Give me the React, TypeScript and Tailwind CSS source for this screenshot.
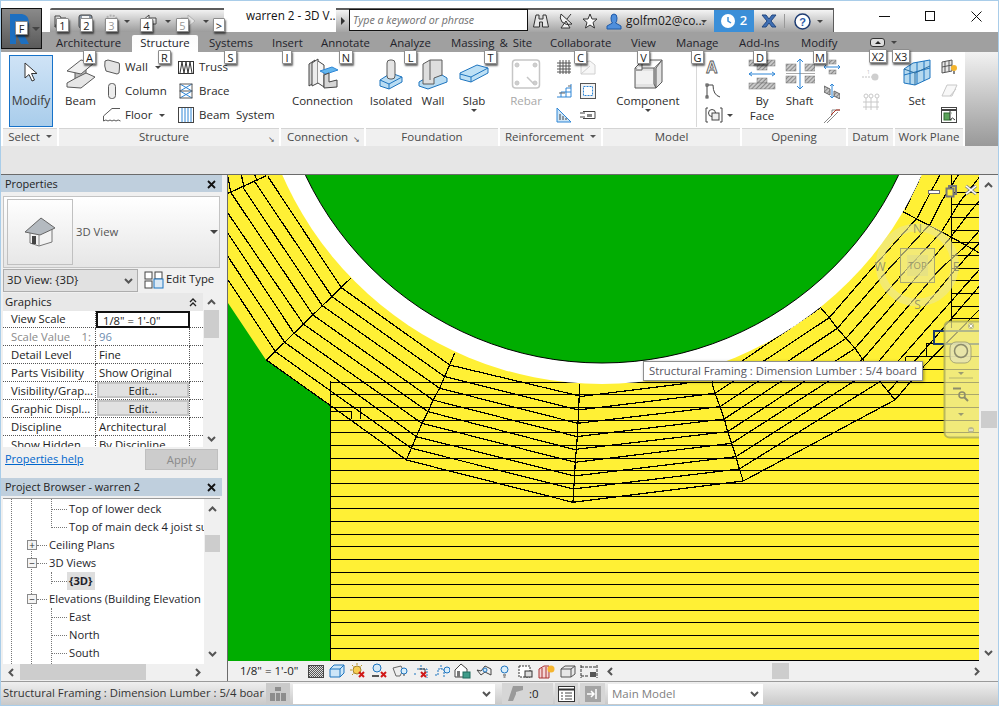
import React from "react";

// small helpers
function Tip({ className, children, off }: { className: string; children: React.ReactNode; off?: boolean }) {
  return (
    <div
      className={
        "absolute h-[14px] flex items-center justify-center bg-white border border-[#8c8c8c] rounded-[1px] shadow-[1px_2px_2px_rgba(0,0,0,0.6)] text-[11px] leading-none " +
        (off ? "text-[#9a9a9a] " : "text-[#222222] ") +
        className
      }
    >
      {children}
    </div>
  );
}

function Arrow({ className = "" }: { className?: string }) {
  return <span className={"inline-block w-0 h-0 border-x-[3px] border-x-transparent border-t-[3px] border-t-[#444444] " + className} />;
}

function Chevron({ dir, className = "" }: { dir: "up" | "down" | "left" | "right"; className?: string }) {
  const d = { up: "M1 6 L4.5 2.5 L8 6", down: "M1 3 L4.5 6.5 L8 3", left: "M6 1 L2.5 4.5 L6 8", right: "M3 1 L6.5 4.5 L3 8" }[dir];
  return (
    <svg width="9" height="9" viewBox="0 0 9 9" className={className}>
      <path d={d} fill="none" stroke="#555555" strokeWidth="2" />
    </svg>
  );
}

function CloseX() {
  return (
    <svg width="9" height="9" viewBox="0 0 9 9">
      <path d="M1 1 L8 8 M8 1 L1 8" stroke="#111111" strokeWidth="1.8" />
    </svg>
  );
}

function Big({ label, second, w, arrow, off, children }: { label: string; second?: string; w: string; arrow?: boolean; off?: boolean; children: React.ReactNode }) {
  return (
    <div className={"flex flex-col items-center pt-[6px] shrink-0 " + w}>
      <div className="h-[32px] flex items-center justify-center">{children}</div>
      <div className={"mt-[3px] leading-[15px] whitespace-nowrap " + (off ? "text-[#a8a8a8]" : "")}>{label}</div>
      {second && <div className="leading-[15px]">{second}</div>}
      {arrow && <Arrow className="mt-[1px]" />}
    </div>
  );
}

function SmallRow({ icon, label, arrow }: { icon: React.ReactNode; label: string; arrow?: boolean }) {
  return (
    <div className="h-[24px] flex items-center whitespace-pre">
      <div className="w-[20px] flex justify-center mr-[3px]">{icon}</div>
      <span>{label}</span>
      {arrow && <Arrow className="ml-[7px]" />}
    </div>
  );
}

function Panel({ title, w, corner, drop, children }: { title: string; w: string; corner?: boolean; drop?: boolean; children: React.ReactNode }) {
  return (
    <div className={"flex flex-col shrink-0 " + w}>
      <div className="h-[76px] flex">{children}</div>
      <div className={"h-[18px] bg-[#f0f0f0] border-t border-[#d4d4d4] flex items-center justify-center relative text-[#4a4a4a] leading-none pb-[2px] " + (corner ? "pr-[10px]" : "")}>
        <span>{title}</span>
        {drop && <Arrow className="ml-[6px] border-t-[#555555]" />}
        {corner && <span className="absolute right-[4px] bottom-[3px] text-[8px] text-[#555555]">↘</span>}
      </div>
    </div>
  );
}

const g = "#5a5a5a";
const bl = "#2f86d6";

function BeamIcon() {
  return (
    <svg width="30" height="32" viewBox="0 0 30 32">
      <path d="M9 14 L9 24 L20 18 L20 9 Z" fill="#bcbcbc" stroke={g} />
      <path d="M1 13 L15 2 L28 5 L15 16 Z" fill="#f0f0f0" stroke={g} />
      <path d="M1 25 L10 20 L20 15 L29 19 L15 30 L1 29 Z" fill="#e6e6e6" stroke={g} />
    </svg>
  );
}
const WallS = () => (
  <svg width="16" height="16" viewBox="0 0 16 16"><path d="M1 2 L4 1 L15 4 Q16 5 15 14 L13 15 L2 12 Q0 7 1 2 Z" fill="#e4e4e4" stroke={g} /></svg>
);
const ColumnS = () => (
  <svg width="10" height="16" viewBox="0 0 10 16"><rect x="1.5" y="0.5" width="7" height="15" rx="3" fill="#ededed" stroke={g} /></svg>
);
const FloorS = () => (
  <svg width="18" height="16" viewBox="0 0 18 16"><path d="M0.5 9 L9 1.5 L17 1.5 M0.5 9 L0.5 14 Q3 12 5 14 Q7 12 9 14 Q11 12 13 14 Q15 12 17.5 14" fill="none" stroke={g} /></svg>
);
const TrussS = () => (
  <svg width="16" height="13" viewBox="0 0 16 13"><rect x="0.5" y="0.5" width="15" height="12" fill="#fff" stroke="#333" /><path d="M2 12 L4 1 L6 12 L8 1 L10 12 L12 1 L14 12" fill="none" stroke="#333" /></svg>
);
const BraceS = () => (
  <svg width="14" height="16" viewBox="0 0 14 16"><path d="M1 1 L13 8 L1 15 M13 1 L1 8 L13 15" fill="none" stroke={bl} /><path d="M0.5 1 H13.5 M0.5 8 H13.5 M0.5 15 H13.5 M1 1 V15 M13 1 V15" fill="none" stroke={g} /></svg>
);
const BeamSys = () => (
  <svg width="16" height="16" viewBox="0 0 16 16"><rect x="0.5" y="0.5" width="15" height="15" fill="#fff" stroke="#444" /><path d="M4 1 V15 M7 1 V15 M10 1 V15 M13 1 V15" stroke={bl} /></svg>
);
const ConnIcon = () => (
  <svg width="32" height="32" viewBox="0 0 32 32">
    <path d="M2 6 L8 2 L8 24 L2 28 Z" fill="#d4d4d4" stroke="#444" />
    <path d="M5 5 L11 1 L11 25 L5 28 Z" fill="#ececec" stroke="#444" />
    <path d="M11 3 L17 7 L17 29 L11 25" fill="#f6f6f6" stroke="#444" />
    <path d="M13 13 L25 9 L31 12 L19 16 Z" fill="#63b6ee" stroke={bl} />
    <path d="M17 17 L22 15 L22 24 L30 22 L30 29 L17 30 Z" fill="#d6d6d6" stroke="#444" />
  </svg>
);
const IsoIcon = () => (
  <svg width="24" height="32" viewBox="0 0 24 32">
    <path d="M1 22 L12 15 L23 19 L23 24 L10 31 L1 28 Z" fill="#b9dcf2" stroke="#1d74bf" />
    <path d="M1 22 L10 26 L23 19 M10 26 V31" fill="none" stroke="#1d74bf" />
    <rect x="8" y="2" width="8" height="19" rx="3" fill="#e4e4e4" stroke={g} />
  </svg>
);
const WallFIcon = () => (
  <svg width="30" height="32" viewBox="0 0 30 32">
    <path d="M1 24 L8 20 L24 17 L29 20 L29 24 L10 31 L1 28 Z" fill="#b9dcf2" stroke="#1d74bf" />
    <path d="M5 6 L12 2 L24 2 L24 17 L16 20 L16 26 L5 26 Z" fill="#dedede" stroke={g} />
    <path d="M12 2 V22" stroke={g} />
  </svg>
);
const SlabIcon = () => (
  <svg width="30" height="20" viewBox="0 0 30 20">
    <path d="M1 9 L18 1 L29 4 L29 9 L12 18 L1 15 Z" fill="#bde0f5" stroke="#1d74bf" />
    <path d="M1 10 L12 13 L29 4 M12 13 V18" fill="none" stroke="#1d74bf" />
  </svg>
);
const RebarIcon = () => (
  <svg width="30" height="32" viewBox="0 0 30 32" stroke="#c6c6c6" fill="none">
    <rect x="1.5" y="2" width="27" height="28" rx="3" strokeWidth="1.5" />
    <circle cx="6" cy="7" r="2" fill="#cfcfcf" />
    <circle cx="24" cy="7" r="2" fill="#cfcfcf" />
    <circle cx="6" cy="25" r="2" fill="#cfcfcf" />
    <circle cx="24" cy="25" r="2" fill="#cfcfcf" />
    <path d="M16 19 L23 26" strokeWidth="1.5" />
  </svg>
);
const GridS = () => (
  <svg width="14" height="14" viewBox="0 0 14 14"><path d="M0 3 H14 M0 6 H14 M0 9 H14 M0 12 H14 M3 0 V14 M6 0 V14 M9 0 V14 M12 0 V14" stroke="#555" /></svg>
);
const CoverS = () => (
  <svg width="16" height="15" viewBox="0 0 16 15"><path d="M1 3 L10 1 L15 5 V14 H1 Z M1 14 L10 6" fill="#f7f7f7" stroke="#d0d0d0" /></svg>
);
const DimS = () => (
  <svg width="16" height="16" viewBox="0 0 16 16"><path d="M1 14 H15 V1 M10 14 V5 H15 M5 14 V9 H15" fill="none" stroke={bl} /><path d="M3 10 H9 M12 3 H15" stroke="#666" /></svg>
);
const AreaS = () => (
  <svg width="16" height="16" viewBox="0 0 16 16"><rect x="0.5" y="0.5" width="15" height="15" fill="#f2f2f2" stroke="#555" /><rect x="3.5" y="3.5" width="9" height="9" fill="#fff" stroke={bl} strokeDasharray="2 1" /></svg>
);
const PathS = () => (
  <svg width="16" height="16" viewBox="0 0 16 16"><path d="M1 1 L15 15 H1 Z" fill="#cfe6f7" stroke={bl} /><path d="M4 13 V7 M7 13 V9 M10 13 V11" stroke="#444" /></svg>
);
const CouplerS = () => (
  <svg width="16" height="10" viewBox="0 0 16 10"><path d="M3 1.5 H15 V8.5 H3 M0 3 H5 M0 7 H5" fill="#fff" stroke="#444" /><rect x="7" y="4" width="5" height="3" fill="#888" /></svg>
);
const CompIcon = () => (
  <svg width="30" height="32" viewBox="0 0 30 32">
    <path d="M2 10 L21 10 L29 2 L29 24 L23 30 L2 30 Z" fill="#e2e2e2" stroke={g} />
    <path d="M21 10 V26 L23 30 L23 10 L29 2" fill="#c8c8c8" stroke={g} />
    <path d="M2 10 L10 2 L29 2 M9 3 V12 L3 12" fill="#f4f4f4" stroke={g} />
    <rect x="3" y="13" width="17" height="13" fill="#f1f1f1" />
  </svg>
);
const ModelA = () => (
  <svg width="18" height="16" viewBox="0 0 18 16">
    <text x="1" y="14" fontSize="16" fontWeight="700" fill="#f4f4f4" stroke="#555" strokeWidth="0.8" fontFamily="Liberation Sans">A</text>
  </svg>
);
const ModelLine = () => (
  <svg width="16" height="16" viewBox="0 0 16 16"><path d="M2 3 V13 M2 2 H8 Q8 12 15 14" fill="none" stroke="#444" /><rect x="1" y="1" width="2" height="2" fill="#fff" stroke="#444" /><rect x="1" y="13" width="2" height="2" fill="#fff" stroke="#444" /></svg>
);
const ModelGroup = () => (
  <svg width="18" height="16" viewBox="0 0 18 16"><path d="M3 1 H1 V15 H3 M15 1 H17 V15 H15" fill="none" stroke="#444" /><circle cx="7" cy="6" r="3.5" fill="#fff" stroke="#444" /><rect x="7" y="6" width="7" height="7" fill="#eee" stroke="#444" /></svg>
);
function HatchBar({ x, y, w, h }: { x: number; y: number; w: number; h: number }) {
  return <rect x={x} y={y} width={w} height={h} fill="url(#hatch)" stroke="#777" strokeWidth="0.5" />;
}
const FaceIcon = () => (
  <svg width="28" height="32" viewBox="0 0 28 32">
    <defs>
      <pattern id="hatch" width="3" height="3" patternUnits="userSpaceOnUse" patternTransform="rotate(45)">
        <rect width="3" height="3" fill="#c8c8c8" />
        <rect width="1" height="3" fill="#888888" />
      </pattern>
    </defs>
    <HatchBar x={1} y={2} w={26} h={6} />
    <HatchBar x={9} y={8} w={10} h={4} />
    <HatchBar x={9} y={20} w={10} h={5} />
    <HatchBar x={1} y={25} w={26} h={6} />
    <path d="M1 16 H27 M4 14 L1 16 L4 18 M24 14 L27 16 L24 18" fill="none" stroke={bl} />
  </svg>
);
const ShaftIcon = () => (
  <svg width="30" height="32" viewBox="0 0 30 32">
    <HatchBar x={1} y={6} w={10} h={7} />
    <HatchBar x={20} y={6} w={10} h={7} />
    <HatchBar x={1} y={18} w={10} h={7} />
    <HatchBar x={20} y={18} w={10} h={7} />
    <path d="M1 15.5 H30" stroke="#aaa" />
    <path d="M15 1 V31 M12 4 L15 1 L18 4 M12 28 L15 31 L18 28" fill="none" stroke={bl} />
  </svg>
);
const OpenA = () => (
  <svg width="16" height="16" viewBox="0 0 16 16"><HatchBar x={5} y={1} w={7} h={4} /><HatchBar x={5} y={11} w={7} h={4} /><path d="M0 8 H16 M2 6 L0 8 L2 10 M14 6 L16 8 L14 10" fill="none" stroke={bl} /></svg>
);
const OpenB = () => (
  <svg width="16" height="16" viewBox="0 0 16 16"><path d="M0 3 L6 6 V12 L0 9 Z M10 8 L16 11 V16 L10 13 Z" fill="url(#hatch)" stroke="#666" /><path d="M8 1 V15 M6 3 L8 1 L10 3 M6 13 L8 15 L10 13" fill="none" stroke={bl} /></svg>
);
const OpenC = () => (
  <svg width="16" height="16" viewBox="0 0 16 16"><path d="M0 16 L8 8 V3 H16 M3 16 L14 5" fill="none" stroke="#888" /><path d="M7 8 L12 3 H16" fill="none" stroke="#b33020" /></svg>
);
const Level = () => (
  <svg width="18" height="14" viewBox="0 0 18 14"><path d="M0 7 H10" stroke="#c4c4c4" strokeDasharray="2 1" /><circle cx="13" cy="7" r="3.5" fill="#cfcfcf" /><text x="5" y="4" fontSize="5" fill="#bbb">1</text></svg>
);
const GridD = () => (
  <svg width="18" height="18" viewBox="0 0 18 18" fill="none" stroke="#c8c8c8"><circle cx="4" cy="3" r="2" /><circle cx="9" cy="3" r="2" /><circle cx="15" cy="3" r="2" /><path d="M1 9 H17 M1 14 H17 M4 5 V17 M15 5 V17 M9 5 V17" /></svg>
);
const SetIcon = () => (
  <svg width="28" height="30" viewBox="0 0 28 30">
    <path d="M1 10 L10 4 L27 1 L27 19 L12 26 L1 24 Z" fill="#b5d9ef" stroke="#1d74bf" />
    <path d="M7 6 V25 M14 3 V25 M21 2 V22 M1 16 L27 9" stroke="#1d74bf" fill="none" />
    <path d="M1 10 L12 14 L27 7 M12 14 V26" stroke="#2d6f9f" fill="none" />
  </svg>
);
const RefLight = () => (
  <svg width="17" height="17" viewBox="0 0 17 17"><path d="M1 3 L11 1 V12 L1 14 Z M1 8 L11 6 M4 2 V13 M8 2 V12" fill="#e8e8e8" stroke="#555" /><circle cx="13" cy="9" r="3" fill="#f5b52e" /><rect x="12" y="12" width="2" height="3" fill="#888" /></svg>
);
const RefPlane = () => (
  <svg width="17" height="16" viewBox="0 0 17 16"><path d="M1 13 L6 2 H16 L11 13 Z M9 13 L15 6" fill="#f8f8f8" stroke="#c8c8c8" /></svg>
);
const ViewerS = () => (
  <svg width="16" height="16" viewBox="0 0 16 16"><rect x="0.5" y="0.5" width="15" height="15" fill="#fff" stroke="#444" /><path d="M0.5 3 H15.5" stroke="#444" strokeWidth="2" /><rect x="3" y="6" width="7" height="7" fill="#5ba35b" stroke="#2f6b2f" /><path d="M9 4 V13 L11.5 11 L14 13" fill="#fff" stroke="#333" /></svg>
);

const QFolder = () => (
  <svg width="15" height="15" viewBox="0 0 15 15"><path d="M1 2 H6 L7 4 H12 V6 M1 2 V13 L4 6 H14 L11 13 H1" fill="#efefef" stroke="#444" /></svg>
);
const QSave = () => (
  <svg width="15" height="15" viewBox="0 0 15 15"><rect x="1" y="1" width="13" height="13" rx="2" fill="#8a98a8" stroke="#444" /><rect x="4" y="2" width="7" height="5" fill="#f4f4f4" /></svg>
);
const QSync = () => (
  <svg width="15" height="15" viewBox="0 0 15 15"><circle cx="7.5" cy="7.5" r="6" fill="none" stroke="#b0b0b0" strokeWidth="2" strokeDasharray="2 1.2" /><circle cx="7.5" cy="7.5" r="2" fill="none" stroke="#b0b0b0" /></svg>
);
const QUndo = ({ off }: { off?: boolean }) => (
  <svg width="16" height="14" viewBox="0 0 16 14"><path d={off ? "M15 7 L8 1 V4 H1 V10 H8 V13 Z" : "M1 7 L8 1 V4 H15 V10 H8 V13 Z"} fill={off ? "#e6e6e6" : "#f2f2f2"} stroke={off ? "#b0b0b0" : "#444"} /></svg>
);

function Btn3({ children }: { children: React.ReactNode }) {
  return <div className="w-[21px] flex justify-center shrink-0">{children}</div>;
}
const RedX = ({ x = 9, y = 9 }: { x?: number; y?: number }) => (
  <path d={`M${x} ${y} l5 5 m0 -5 l-5 5`} stroke="#d01818" strokeWidth="2" />
);

const viewIcons = [
  <svg width="16" height="13" viewBox="0 0 16 13"><defs><pattern id="chk" width="2" height="2" patternUnits="userSpaceOnUse"><rect width="2" height="2" fill="#dddddd" /><rect width="1" height="1" fill="#555555" /><rect x="1" y="1" width="1" height="1" fill="#555555" /></pattern></defs><rect x="0.5" y="0.5" width="15" height="12" fill="url(#chk)" stroke="#444" /></svg>,
  <svg width="16" height="14" viewBox="0 0 16 14"><path d="M1 5 L5 1 H15 V9 L11 13 H1 Z M1 5 H11 V13 M11 5 L15 1" fill="#cde6f8" stroke="#1d74bf" /></svg>,
  <svg width="16" height="16" viewBox="0 0 16 16"><circle cx="7" cy="7" r="4" fill="#f6ce55" stroke="#a8862a" /><path d="M7 0 V2 M0 7 H2 M2 2 L3.5 3.5 M12 2 L10.5 3.5 M2 12 L3.5 10.5" stroke="#b8962a" /><RedX /></svg>,
  <svg width="16" height="16" viewBox="0 0 16 16"><circle cx="6" cy="5" r="4" fill="#d5e9f7" stroke="#1d74bf" /><path d="M1 13 H8" stroke="#555" strokeWidth="2" /><RedX x={10} y={9} /></svg>,
  <svg width="16" height="15" viewBox="0 0 16 15"><path d="M1 4 L9 2 L11 6 L8 12 H4 Z" fill="#eee" stroke="#666" /><circle cx="12" cy="7" r="3" fill="#d9eefb" stroke="#1d74bf" /><path d="M11 11 H13" stroke="#444" /></svg>,
  <svg width="16" height="15" viewBox="0 0 16 15"><path d="M4 5 H14 V14 M1 10 H4 M8 1 V5" fill="none" stroke="#1d74bf" strokeDasharray="2 1" /><path d="M6 5 H12 V9" stroke="#444" fill="none" /><RedX x={8} y={8} /></svg>,
  <svg width="16" height="15" viewBox="0 0 16 15"><path d="M1 11 H4 V5 H10 V14 M7 1 V5" fill="none" stroke="#1d74bf" strokeDasharray="2 1" /><circle cx="13" cy="6" r="3" fill="#d9eefb" stroke="#1d74bf" /></svg>,
  <svg width="17" height="16" viewBox="0 0 17 16"><path d="M1 7 L7 1 L13 6 V14 H1 Z" fill="#fff" stroke="#444" /><rect x="3" y="8" width="3" height="6" fill="#777" /><rect x="9" y="9" width="7" height="6" fill="#3f9c8a" stroke="#1f6b5d" /></svg>,
  <svg width="16" height="12" viewBox="0 0 16 12"><path d="M1 5 L5 10 L9 7 L15 10 L15 4 L9 1 L5 6 Z" fill="none" stroke="#444" /><circle cx="9" cy="5" r="2" fill="#cfe6f7" stroke="#1d74bf" /></svg>,
  <svg width="9" height="13" viewBox="0 0 9 13"><circle cx="4.5" cy="4.5" r="3.5" fill="#d9eefb" stroke="#1d74bf" /><path d="M3 10 H6 M3.5 12 H5.5" stroke="#444" /></svg>,
  <svg width="16" height="15" viewBox="0 0 16 15"><rect x="1" y="2" width="11" height="11" fill="#fff" stroke="#333" strokeDasharray="2 1" /><rect x="7" y="7" width="7" height="6" fill="#ddd" stroke="#333" /></svg>,
  <svg width="17" height="15" viewBox="0 0 17 15"><path d="M1 5 L6 2 H11 L11 14 H1 Z M4 4 V14 M8 3 V14" fill="#f3d5d5" stroke="#a33" /><circle cx="13" cy="5" r="3.5" fill="#f5b52e" /></svg>,
  <svg width="16" height="15" viewBox="0 0 16 15"><path d="M1 5 L5 2 H15 V10 L11 13 H1 Z M1 5 H11 V13 M11 5 L15 2" fill="#e8e8e8" stroke="#555" /></svg>,
  <svg width="18" height="15" viewBox="0 0 18 15"><path d="M1 1 V14 M17 1 V14 M1 3 H17 M1 12 H9" stroke="#333" fill="none" strokeDasharray="3 1" /><rect x="10" y="8" width="6" height="5" fill="#555" /></svg>,
];

const hLines: number[] = [];
for (let i = 0; i < 23; i++) hLines.push(Math.round(381.7 + i * 12.67) + 0.5);
const topLines: number[] = [];
for (let i = 0; i < 11; i++) topLines.push(Math.round(318.3 - i * 12.67) + 0.5);

function Canvas() {
  const a: number[][][] = [
    [[120, 5], [340, 338]], [[80, 20], [312, 365]], [[45, 38], [283, 392]], [[8, 52], [255, 420]],
    [[0, 115], [227, 448]], [[0, 175], [198, 475]], [[0, 245], [170, 502]], [[0, 315], [142, 530]],
    [[0, 55], [115, 2]], [[40, 0], [48, 35]], [[0, 5], [8, 52]], [[80, 0], [88, 18]],
    [[368, 310], [115, 555]], [[115, 555], [305, 690], [535, 855]],
    [[340, 338], [665, 570]], [[312, 365], [650, 605]], [[283, 392], [635, 640]], [[255, 420], [615, 675]],
    [[227, 448], [600, 710]], [[198, 475], [582, 745]], [[170, 502], [565, 785]], [[142, 530], [550, 820]],
    [[680, 535], [665, 570], [650, 605], [635, 640], [615, 675], [600, 710], [582, 745], [565, 785], [550, 820], [535, 855]],
    [[665, 570], [1055, 663]], [[650, 605], [1052, 705]], [[635, 640], [1050, 745]], [[615, 675], [1048, 785]],
    [[600, 710], [1045, 825]], [[582, 745], [1042, 862]], [[565, 785], [1040, 903]], [[550, 820], [1037, 942]], [[535, 855], [1035, 982]],
    [[1055, 628], [1052, 705], [1048, 785], [1042, 862], [1035, 982]],
    [[307, 710], [370, 710], [370, 733]], [[397, 695], [397, 733]],
  ];
  const b: number[][][] = [
    [[58, 665], [380, 625]], [[55, 705], [465, 655]], [[52, 745], [480, 695]], [[50, 785], [493, 732]],
    [[48, 823], [503, 770]], [[45, 862], [515, 805]], [[43, 903], [528, 845]], [[40, 942], [538, 882]], [[38, 982], [550, 918]],
    [[455, 620], [465, 655], [480, 695], [493, 732], [503, 770], [515, 805], [528, 845], [538, 882], [550, 918]],
    [[455, 620], [782, 398]], [[465, 655], [808, 428]], [[480, 695], [832, 460]], [[493, 732], [858, 490]],
    [[503, 770], [885, 520]], [[515, 805], [908, 553]], [[528, 845], [935, 585]], [[538, 882], [960, 620]], [[550, 918], [1005, 675]],
    [[782, 398], [808, 428], [832, 460], [858, 490], [885, 520], [908, 553], [935, 585], [960, 620], [985, 650], [1005, 675]],
    [[808, 428], [932, 285], [1072, 128], [1110, 55], [1140, 0]],
    [[832, 460], [984, 285], [1110, 148], [1150, 70], [1195, 0]],
    [[858, 490], [1038, 285], [1145, 170], [1200, 80], [1257, 8]],
    [[885, 520], [1088, 285], [1172, 187], [1215, 130], [1257, 78]],
    [[908, 553], [1138, 285], [1220, 210], [1257, 168]],
    [[935, 585], [1185, 285], [1257, 205]],
    [[960, 620], [1257, 285]], [[985, 650], [1257, 335]], [[1005, 675], [1095, 570], [1257, 405]],
    [[1025, 108], [1175, 187], [1257, 233]], [[1035, 105], [1082, 5]],
    [[1175, 0], [1175, 460]], [[1100, 505], [1100, 545]], [[1100, 505], [1120, 505]], [[1037, 545], [1257, 545]], [[1037, 545], [1037, 570]],
  ];
  const pts = (l: number[][]) => l.map((p) => p.join(",")).join(" ");
  return (
    <svg className="block w-[751px] h-[486px]" viewBox="228 175 751 486">
      <rect x="228" y="175" width="751" height="486" fill="#00ad00" />
      <polygon points="228,175 979,175 979,661 330,661 330,405 266,360 228,303" fill="#fff035" />
      <g shapeRendering="crispEdges" stroke="#000000" fill="none">
        {hLines.map((y) => (
          <line key={y} x1="330" x2="979" y1={y} y2={y} />
        ))}
        <line x1="330.5" x2="330.5" y1="381" y2="661" />
        <line x1="900" x2="979" y1="369.5" y2="369.5" />
        {topLines.map((y) => (
          <line key={y} x1="952" x2="979" y1={y} y2={y} />
        ))}
      </g>
      <g transform="translate(228 175) scale(0.3333)" stroke="#000000" strokeWidth="3.6" fill="none" shapeRendering="crispEdges">
        {a.map((l, i) => (
          <polyline key={i} points={pts(l)} />
        ))}
      </g>
      <g transform="translate(560 175) scale(0.3333)" stroke="#000000" strokeWidth="3.6" fill="none" shapeRendering="crispEdges">
        {b.map((l, i) => (
          <polyline key={i} points={pts(l)} />
        ))}
      </g>
      <circle cx="602" cy="35" r="349" fill="#ffffff" />
      <circle cx="602" cy="35" r="328" fill="#00ad00" stroke="#000000" />
      <rect x="933.5" y="330.5" width="60" height="13" fill="none" stroke="#1b3a6b" strokeWidth="2" shapeRendering="crispEdges" />

      {/* view cube */}
      <circle cx="917.3" cy="265" r="37.5" fill="rgba(255,250,170,0.1)" stroke="rgba(235,230,150,0.6)" strokeWidth="8" />
      <rect x="900.5" y="248.5" width="34" height="34" fill="rgba(235,230,150,0.62)" stroke="rgba(160,160,115,0.9)" />
      <rect x="907" y="255" width="21" height="21" fill="rgba(220,218,140,0.55)" />
      <g fontFamily="Open Sans" fill="rgba(135,135,100,0.85)" textAnchor="middle">
        <text x="917.5" y="269" fontSize="9.5">TOP</text>
        <text x="917.5" y="233" fontSize="12">N</text>
        <text x="917.5" y="309" fontSize="12">S</text>
        <text x="880" y="271" fontSize="12">W</text>
        <text x="956" y="271" fontSize="12">E</text>
      </g>

      {/* canvas window buttons */}
      <g fill="#ffffff" stroke="#6e6e6e">
        <rect x="928.5" y="190.5" width="11" height="3" />
        <rect x="949" y="186" width="7" height="8" fill="none" strokeWidth="2" stroke="#777" />
        <rect x="946.5" y="188.5" width="7" height="8" fill="#fff035" strokeWidth="2" stroke="#777" />
        <path d="M966 186 L976 194 M976 186 L966 194" stroke="#888" strokeWidth="3" />
        <path d="M966 186 L976 194 M976 186 L966 194" stroke="#fff" strokeWidth="1.5" />
      </g>

      {/* navigation bar */}
      <rect x="944.5" y="321.5" width="42" height="116" rx="5" fill="rgba(235,232,150,0.72)" stroke="rgba(165,165,90,0.75)" strokeWidth="2" />
      <circle cx="971" cy="326" r="3" fill="rgba(180,180,140,0.9)" />
      <path d="M969.5 324.5 L972.5 327.5 M972.5 324.5 L969.5 327.5" stroke="#fff" />
      <rect x="950" y="342" width="21" height="21" rx="6" fill="rgba(230,228,180,0.8)" stroke="rgba(150,150,110,0.8)" />
      <circle cx="961" cy="351" r="6.5" fill="none" stroke="rgba(130,130,100,0.9)" strokeWidth="1.5" />
      <path d="M958 372 H964 L961 375 Z" fill="#9a9a70" />
      <path d="M949 378 H973" stroke="rgba(170,170,110,0.8)" />
      <path d="M953 388.5 H961" stroke="#8d8d6a" strokeWidth="2" />
      <circle cx="962" cy="395" r="3" fill="none" stroke="#8d8d6a" strokeWidth="1.5" />
      <path d="M964 397 L968 401" stroke="#8d8d6a" strokeWidth="2" />
      <path d="M958 413 H964 L961 416 Z" fill="#9a9a70" />
      <circle cx="971" cy="430" r="3" fill="rgba(180,180,140,0.9)" />
      <path d="M969 430 H973" stroke="#fff" />
    </svg>
  );
}

function PropRow({ label, value, muted, children }: { label: string; value?: string; muted?: boolean; children?: React.ReactNode }) {
  return (
    <div className="flex h-[18px] shrink-0 leading-[18px] bg-white">
      <div className={"w-[93px] pl-[8px] border-b border-r border-dotted border-[#555555] whitespace-nowrap overflow-hidden " + (muted ? "text-[#8a8a8a]" : "text-[#222222]")}>{label}</div>
      <div className={"w-[94px] border-b border-r border-dotted border-[#555555] pl-[3px] whitespace-nowrap " + (muted ? "text-[#6f8db0]" : "text-[#222222]")}>
        {value}
        {children}
      </div>
      <div className="flex-1 border-b border-dotted border-[#555555]" />
    </div>
  );
}

function TreeRow({ level, box, label, bold }: { level: 2 | 3; box?: "+" | "-"; label: string; bold?: boolean }) {
  return (
    <div className="h-[18px] flex items-center whitespace-nowrap text-[#1e1e2a] text-[11.2px] relative">
      <div className={level === 3 ? "w-[47px] shrink-0" : "w-[24px] shrink-0"} />
      {box && (
        <div className="w-[10px] h-[10px] shrink-0 border border-[#8a8a8a] bg-[#f4f4f4] relative z-10 flex items-center justify-center text-[#333333] text-[10px] leading-none">
          {box === "+" ? "+" : "−"}
        </div>
      )}
      <div className={"border-t border-dotted border-[#777777] shrink-0 " + (level === 3 ? "w-[16px] ml-[1px]" : "w-[10px]")} />
      <span className={"px-[2px] leading-[18px] " + (bold ? "font-bold bg-[#dedede]" : "")}>{label}</span>
    </div>
  );
}

function LeftPanel() {
  return (
    <div className="w-[227px] shrink-0 border-r border-[#6b6b6b] flex flex-col text-[#222222] text-[11.3px] bg-[#f0f0f0]">
      {/* properties */}
      <div className="h-[17px] w-[221px] bg-[#bfcfdd] flex items-center justify-between pl-[4px] pr-[6px] pt-[1px] text-[10.9px]">
        <span>Properties</span>
        <CloseX />
      </div>
      <div className="ml-[2px] mt-[4px] w-[217px] h-[72px] border border-[#c4c4c4] bg-linear-to-b from-white to-[#e6e6e6] flex items-center pl-[3px] shrink-0">
        <div className="w-[66px] h-[66px] border border-[#c0c0c0] flex items-center justify-center">
          <svg width="32" height="30" viewBox="0 0 32 30">
            <path d="M6 13 L6 26 L15 29 L28 25 L28 12 Z" fill="#f3f3f3" stroke="#777777" />
            <path d="M1 15 L17 1 L31 11 L16 18 Z" fill="#b4bac0" stroke="#666666" />
            <path d="M15 18 V29" stroke="#888888" />
            <rect x="8" y="19" width="4" height="8" fill="#444444" />
          </svg>
        </div>
        <span className="ml-[3px] text-[#555555]">3D View</span>
        <span className="ml-[92px] w-0 h-0 border-x-[4px] border-x-transparent border-t-[4px] border-t-[#444444]" />
      </div>
      <div className="h-[23px] mt-[1px] flex items-center shrink-0">
        <div className="ml-[2px] w-[135px] h-[23px] border border-[#adadad] bg-[#e1e1e1] flex items-center justify-between pl-[3px] pr-[4px]">
          <span>3D View: {"{3D}"}</span>
          <Chevron dir="down" />
        </div>
        <svg className="ml-[6px] mb-[2px]" width="20" height="18" viewBox="0 0 20 18" fill="#fff" stroke="#444444">
          <rect x="1" y="1" width="7" height="7" />
          <rect x="11" y="1" width="7" height="7" />
          <rect x="1" y="10" width="7" height="7" />
          <rect x="10" y="8" width="9" height="9" fill="#dbe9f5" stroke="#1d74bf" />
        </svg>
        <span className="ml-[2px] mb-[2px]">Edit Type</span>
      </div>
      <div className="mt-[1px] h-[154px] ml-[2px] w-[217px] flex shrink-0">
        <div className="w-[200px] flex flex-col overflow-hidden shrink-0">
          <div className="h-[18px] shrink-0 bg-[#e8e8e8] flex items-center justify-between pl-[2px] pr-[6px] leading-none">
            <span>Graphics</span>
            <svg width="8" height="9" viewBox="0 0 8 9"><path d="M1 4 L4 1 L7 4 M1 8 L4 5 L7 8" fill="none" stroke="#222222" strokeWidth="1.3" /></svg>
          </div>
          <div className="flex h-[17px] shrink-0 leading-[15px] bg-white">
            <div className="w-[93px] pl-[8px] border-b border-r border-dotted border-[#555555]">View Scale</div>
            <div className="w-[94px] border-2 border-[#111111] pl-[5px]">1/8" = 1'-0"</div>
            <div className="flex-1 border-b border-dotted border-[#555555]" />
          </div>
          <div className="flex h-[18px] shrink-0 leading-[18px] bg-white">
            <div className="w-[93px] pl-[8px] pr-[4px] border-b border-r border-dotted border-[#555555] text-[#8a8a8a] flex justify-between">
              <span>Scale Value</span>
              <span>1:</span>
            </div>
            <div className="w-[94px] border-b border-r border-dotted border-[#555555] pl-[3px] text-[#6f8db0]">96</div>
            <div className="flex-1 border-b border-dotted border-[#555555]" />
          </div>
          <PropRow label="Detail Level" value="Fine" />
          <PropRow label="Parts Visibility" value="Show Original" />
          <PropRow label="Visibility/Grap...">
            <div className="ml-[-2px] h-[16px] bg-[#e1e1e1] border-2 border-[#c4c4c4] text-center leading-[14px]">Edit...</div>
          </PropRow>
          <PropRow label="Graphic Displ...">
            <div className="ml-[-2px] h-[16px] bg-[#e1e1e1] border-2 border-[#c4c4c4] text-center leading-[14px]">Edit...</div>
          </PropRow>
          <PropRow label="Discipline" value="Architectural" />
          <PropRow label="Show Hidden" value="By Discipline" />
        </div>
        <div className="w-[17px] flex flex-col items-center">
          <Chevron dir="up" className="mt-[5px]" />
          <div className="w-[15px] h-[28px] bg-[#cdcdcd] mt-[3px]" />
          <div className="flex-1" />
          <Chevron dir="down" className="mb-[4px]" />
        </div>
      </div>
      <div className="h-[25px] flex items-center shrink-0 justify-between pr-[9px]">
        <a className="ml-[4px] text-[#0066cc] underline text-[11px]">Properties help</a>
        <div className="w-[73px] h-[21px] bg-[#cccccc] border border-[#bfbfbf] text-[#8a8a8a] text-center leading-[19px]">Apply</div>
      </div>

      {/* project browser */}
      <div className="mt-[6px] h-[18px] w-[221px] bg-[#bfcfdd] flex items-center justify-between pl-[4px] pr-[6px] shrink-0 text-[10.9px]">
        <span>Project Browser - warren 2</span>
        <CloseX />
      </div>
      <div className="mt-[2px] ml-[2px] w-[217px] h-[166px] flex border-t border-[#9a9a9a] shrink-0 bg-white">
        <div className="w-[201px] relative overflow-hidden pt-[1px] shrink-0">
          <span className="absolute left-[8px] top-0 bottom-0 border-l border-dotted border-[#777777]" />
          <span className="absolute left-[28px] top-0 bottom-0 border-l border-dotted border-[#777777]" />
          <span className="absolute left-[48px] top-0 h-[29px] border-l border-dotted border-[#777777]" />
          <span className="absolute left-[48px] top-[73px] h-[12px] border-l border-dotted border-[#777777]" />
          <span className="absolute left-[48px] top-[109px] h-[56px] border-l border-dotted border-[#777777]" />
          <TreeRow level={3} label="Top of lower deck" />
          <TreeRow level={3} label="Top of main deck 4 joist su" />
          <TreeRow level={2} box="+" label="Ceiling Plans" />
          <TreeRow level={2} box="-" label="3D Views" />
          <TreeRow level={3} label="{3D}" bold />
          <TreeRow level={2} box="-" label="Elevations (Building Elevation" />
          <TreeRow level={3} label="East" />
          <TreeRow level={3} label="North" />
          <TreeRow level={3} label="South" />
        </div>
        <div className="flex-1 bg-[#f0f0f0] flex flex-col items-center">
          <Chevron dir="up" className="mt-[6px]" />
          <div className="w-[15px] h-[17px] bg-[#cdcdcd] mt-[21px]" />
          <div className="flex-1" />
          <Chevron dir="down" className="mb-[6px]" />
        </div>
      </div>
      <div className="ml-[2px] w-[217px] h-[16px] flex items-center shrink-0">
        <Chevron dir="left" className="ml-[4px]" />
        <div className="w-[126px] h-[16px] bg-[#cdcdcd] ml-[4px]" />
        <Chevron dir="right" className="ml-[47px]" />
      </div>
    </div>
  );
}

export default function App() {
  return (
    <div className="relative w-[999px] h-[706px] overflow-hidden border border-[#a9cde9] bg-[#f0f0f0] flex flex-col font-['Open_Sans',sans-serif] text-[11.5px] text-[#2b2b2b]">
      {/* title bar */}
      <div className="h-[31px] bg-white flex items-end shrink-0">
        <div className="w-[49px] shrink-0" />
        <div className="w-[174px] h-[24px] shrink-0 rounded-tl-[2px] border-t-2 border-[#5c5c5c] bg-linear-to-b from-[#f2f2f2] to-[#9c9c9c] flex items-center">
          <div className="w-[22px] flex justify-center"><QFolder /></div>
          <div className="w-[26px] flex justify-center"><QSave /></div>
          <div className="w-[26px] flex justify-center"><QSync /></div>
          <Arrow />
          <div className="w-[32px] flex justify-center ml-[3px]"><QUndo /></div>
          <Arrow />
          <div className="w-[31px] flex justify-center ml-[1px]"><QUndo off /></div>
          <Arrow />
        </div>
        <div className="w-[112px] h-[24px] pl-[22px] shrink-0 text-[#111111] text-[11.7px] leading-[15px] pt-0 whitespace-nowrap">warren 2 - 3D V...</div>
        <div className="w-[498px] h-[24px] shrink-0 border-t-2 border-[#5c5c5c] bg-linear-to-b from-[#f4f4f4] to-[#a4a4a4] flex items-center border-r">
          <div className="w-[13px] flex justify-center"><span className="w-0 h-0 border-y-[4px] border-y-transparent border-l-[4px] border-l-[#333333]" /></div>
          <div className="w-[179px] h-[22px] -mt-[2px] bg-white border border-[#111111] italic text-[10.7px] text-[#6e6e6e] pl-[3px] leading-[20px]">Type a keyword or phrase</div>
          <svg className="ml-[5px]" width="16" height="15" viewBox="0 0 16 15"><path d="M3 1 H6 V5 H10 V1 H13 L15.5 13 H9.5 V8 H6.5 V13 H0.5 Z" fill="#e6e6e6" stroke="#333333" /></svg>
          <svg className="ml-[9px]" width="16" height="16" viewBox="0 0 16 16"><path d="M3 1 L14 11 Q8 13 4 9 Q1 5 3 1 Z M8 8 L3 15 H12 L8 8 M13 1 L9 6" fill="#f0f0f0" stroke="#333333" /></svg>
          <svg className="ml-[8px]" width="16" height="16" viewBox="0 0 16 16"><path d="M8 1 L10 6 H15 L11 9.5 L12.5 15 L8 12 L3.5 15 L5 9.5 L1 6 H6 Z" fill="#fafafa" stroke="#333333" /></svg>
          <svg className="ml-[8px]" width="16" height="17" viewBox="0 0 16 17"><path d="M5 5 Q5 1 8 1 Q11 1 11 5 Q11 9 9.5 10 L15 13 V16 H1 V13 L6.5 10 Q5 9 5 5 Z" fill="#4f8fdc" stroke="#1f5aa8" /></svg>
          <span className="ml-[4px] text-[12px] text-[#1a1a1a] whitespace-nowrap w-[75px]">golfm02@co...</span>
          <Arrow />
          <div className="ml-[7px] w-[40px] h-[22px] bg-[#3b8fd8] flex items-center justify-center gap-[5px] text-white text-[13px] font-semibold">
            <svg width="14" height="14" viewBox="0 0 14 14"><circle cx="7" cy="7" r="7" fill="#ffffff" /><path d="M7 3 V7 L10 9" fill="none" stroke="#3b8fd8" strokeWidth="1.5" /></svg>
            2
          </div>
          <div className="w-[30px] flex justify-center">
            <svg width="16" height="14" viewBox="0 0 16 14"><path d="M1 1 H5 L8 5 L11 1 H15 L10 7 L15 13 H11 L8 9 L5 13 H1 L6 7 Z" fill="#3e6fb5" stroke="#24487f" /></svg>
          </div>
          <div className="w-[1px] h-[14px] bg-[#999999]" />
          <svg className="ml-[9px]" width="17" height="17" viewBox="0 0 17 17"><circle cx="8.5" cy="8.5" r="7.5" fill="#ffffff" stroke="#1f3d73" strokeWidth="1.5" /><text x="8.5" y="12.5" fontSize="11" fontWeight="700" fill="#2b5aa8" textAnchor="middle" fontFamily="Liberation Sans">?</text></svg>
          <Arrow className="ml-[6px]" />
        </div>
        <div className="flex self-start ml-[27px] mt-[7px]">
          <div className="w-[46px] h-[16px] flex items-center justify-center"><div className="w-[11px] h-[1px] bg-[#111111]" /></div>
          <div className="w-[46px] h-[16px] flex items-center justify-center"><div className="w-[10px] h-[10px] border border-[#111111]" /></div>
          <div className="w-[46px] h-[16px] flex items-center justify-center">
            <svg width="11" height="11" viewBox="0 0 11 11"><path d="M0.5 0.5 L10.5 10.5 M10.5 0.5 L0.5 10.5" stroke="#111111" /></svg>
          </div>
        </div>
      </div>

      {/* tabs */}
      <div className="h-[20px] bg-[#a0a0a0] flex items-end shrink-0 text-[11.4px] text-[#23232b] leading-[18px] whitespace-nowrap">
        <div className="w-[55px]" />
        <div className="w-[76px] h-[18px]">Architecture</div>
        <div className="w-[66px] h-[17px] bg-linear-to-b from-[#fbfbfb] to-[#ffffff] rounded-t-[2px] text-center leading-[16px]">Structure</div>
        <div className="w-[63px] h-[18px] ml-[11px]">Systems</div>
        <div className="w-[49px] h-[18px]">Insert</div>
        <div className="w-[69px] h-[18px]">Annotate</div>
        <div className="w-[61px] h-[18px]">Analyze</div>
        <div className="w-[99px] h-[18px] [word-spacing:2px]">Massing &amp; Site</div>
        <div className="w-[81px] h-[18px]">Collaborate</div>
        <div className="w-[45px] h-[18px]">View</div>
        <div className="w-[63px] h-[18px]">Manage</div>
        <div className="w-[62px] h-[18px]">Add-Ins</div>
        <div className="w-[69px] h-[18px]">Modify</div>
        <div className="w-[15px] h-[9px] mb-[5px] bg-[#dddddd] border border-[#333333] rounded-[3px] flex items-center justify-center"><span className="w-0 h-0 border-x-[3px] border-x-transparent border-b-[3px] border-b-[#222222]" /></div>
        <Arrow className="mb-[8px] ml-[6px] border-t-[#111111]" />
      </div>

      {/* ribbon */}
      <div className="h-[94px] bg-white flex shrink-0 pl-[2px] gap-[2px]">
        <Panel title="Select" w="w-[54px]" drop>
          <div className="ml-[6px] mt-[3px] w-[44px] h-[72px] bg-linear-to-b from-[#cfe3f6] to-[#a9cdeb] border border-[#1672c9] flex flex-col items-center text-[#3a3a3a]">
            <svg className="mt-[6px]" width="14" height="20" viewBox="0 0 14 20"><path d="M1 1 V16 L5 12.5 L8 19 L10.5 18 L7.5 11.5 L13 11.5 Z" fill="#ffffff" stroke="#333333" /></svg>
            <span className="mt-[10px] text-[12px]">Modify</span>
          </div>
        </Panel>
        <Panel title="Structure" w="w-[220px]" corner>
          <Big label="Beam" w="w-[43px]"><BeamIcon /></Big>
          <div className="w-[70px] mt-[3px] shrink-0">
            <SmallRow icon={<WallS />} label="Wall" arrow />
            <SmallRow icon={<ColumnS />} label="Column" />
            <SmallRow icon={<FloorS />} label="Floor" arrow />
          </div>
          <div className="ml-[4px] mt-[3px]">
            <SmallRow icon={<TrussS />} label="Truss" />
            <SmallRow icon={<BraceS />} label="Brace" />
            <SmallRow icon={<BeamSys />} label="Beam  System" />
          </div>
        </Panel>
        <Panel title="Connection" w="w-[83px]" corner>
          <Big label="Connection" w="w-[83px]"><ConnIcon /></Big>
        </Panel>
        <Panel title="Foundation" w="w-[132px]">
          <Big label="Isolated" w="w-[50px]"><IsoIcon /></Big>
          <Big label="Wall" w="w-[34px]"><WallFIcon /></Big>
          <Big label="Slab" w="w-[48px]" arrow><SlabIcon /></Big>
        </Panel>
        <Panel title="Reinforcement" w="w-[101px]" drop>
          <Big label="Rebar" w="w-[52px]" off><RebarIcon /></Big>
          <div className="mt-[3px] grid grid-cols-[24px_24px] grid-rows-[24px_24px_24px] place-items-center">
            <GridS /><CoverS /><DimS /><AreaS /><PathS /><CouplerS />
          </div>
        </Panel>
        <Panel title="Model" w="w-[137px]">
          <Big label="Component" w="w-[90px]" arrow><CompIcon /></Big>
          <div className="mt-[3px] h-[72px] border-l border-[#d8d8d8] ml-[3px] pl-[8px] flex flex-col">
            <div className="h-[24px] flex items-center"><ModelA /></div>
            <div className="h-[24px] flex items-center"><ModelLine /></div>
            <div className="h-[24px] flex items-center"><ModelGroup /><Arrow className="ml-[4px]" /></div>
          </div>
        </Panel>
        <Panel title="Opening" w="w-[104px]">
          <Big label="By" second="Face" w="w-[40px]"><FaceIcon /></Big>
          <Big label="Shaft" w="w-[35px]"><ShaftIcon /></Big>
          <div className="mt-[3px] w-[29px] flex flex-col items-center">
            <div className="h-[24px] flex items-center"><OpenA /></div>
            <div className="h-[24px] flex items-center"><OpenB /></div>
            <div className="h-[24px] flex items-center"><OpenC /></div>
          </div>
        </Panel>
        <Panel title="Datum" w="w-[45px]">
          <div className="w-full flex flex-col items-center pt-[18px] gap-[9px]">
            <Level /><GridD />
          </div>
        </Panel>
        <Panel title="Work Plane" w="w-[68px]">
          <Big label="Set" w="w-[44px]"><SetIcon /></Big>
          <div className="mt-[3px] flex flex-col items-center w-[20px]">
            <div className="h-[24px] flex items-center"><RefLight /></div>
            <div className="h-[24px] flex items-center"><RefPlane /></div>
            <div className="h-[24px] flex items-center"><ViewerS /></div>
          </div>
        </Panel>
        <div className="flex-1 bg-linear-to-b from-[#f2f2f2] to-[#999999]" />
      </div>

      {/* empty strip */}
      <div className="h-[29px] bg-[#e6e6e6] border-b border-[#6b6b6b] shrink-0" />

      {/* main */}
      <div className="h-[507px] flex border-b border-[#9a9a9a] shrink-0">
        <LeftPanel />
        <div className="flex-1 flex flex-col relative">
          <div className="flex h-[486px] shrink-0">
            <div className="relative w-[751px] shrink-0">
              <Canvas />
              <div className="absolute left-[415px] top-[186px] w-[280px] h-[20px] bg-white border border-[#8f8f8f] shadow-[1px_1px_3px_rgba(0,0,0,0.4)] pl-[5px] text-[11.3px] leading-[17px] text-[#555560] whitespace-nowrap">
                Structural Framing : Dimension Lumber : 5/4 board
              </div>
            </div>
            <div className="flex-1 bg-[#f0f0f0] flex flex-col items-center">
              <Chevron dir="up" className="mt-[6px]" />
              <div className="w-[16px] h-[17px] bg-[#cdcdcd] mt-[221px]" />
              <div className="flex-1" />
              <Chevron dir="down" className="mb-[4px]" />
            </div>
          </div>
          <div className="h-[20px] flex items-center shrink-0 bg-[#f0f0f0]">
            <span className="ml-[12px] w-[65px] text-[#222222] whitespace-nowrap">1/8" = 1'-0"</span>
            {viewIcons.map((ic, i) => (
              <Btn3 key={i}>{ic}</Btn3>
            ))}
            <Chevron dir="left" className="ml-[7px]" />
            <div className="w-[17px] h-[16px] bg-[#cdcdcd] ml-[157px]" />
            <Chevron dir="right" className="ml-[183px]" />
          </div>
        </div>
      </div>

      {/* status bar */}
      <div className="h-[23px] flex items-center shrink-0 bg-linear-to-b from-[#efefef] to-[#c9c9c9] text-[#333333] whitespace-nowrap">
        <div className="w-[265px] pl-[2px] overflow-hidden shrink-0 text-[11.3px]">Structural Framing : Dimension Lumber : 5/4 boar</div>
        <div className="w-[24px] h-[21px] bg-[#cacaca] flex items-center justify-center shrink-0">
          <svg width="18" height="16" viewBox="0 0 18 16" fill="#8d8d8d"><rect x="6" y="1" width="6" height="4" /><rect x="1" y="7" width="5" height="8" /><rect x="7" y="7" width="4" height="8" /><rect x="12" y="7" width="5" height="8" /></svg>
        </div>
        <div className="ml-[3px] w-[202px] h-[20px] bg-white flex items-center justify-end pr-[4px] shrink-0"><Chevron dir="down" /></div>
        <div className="ml-[7px] w-[51px] h-[21px] bg-[#d6d6d6] flex items-center pl-[5px] shrink-0">
          <svg width="18" height="17" viewBox="0 0 18 17" fill="#9a9a9a"><path d="M6 1 H16 V5 L9 7 V9 L6 16 H1 Z" /></svg>
          <span className="ml-[4px] text-[#222222]">:0</span>
        </div>
        <div className="ml-[2px] w-[23px] h-[21px] bg-[#d6d6d6] flex items-center justify-center shrink-0">
          <svg width="17" height="16" viewBox="0 0 17 16"><rect x="0.5" y="0.5" width="16" height="15" fill="#fff" stroke="#333" /><path d="M0.5 3.5 H16.5" stroke="#333" strokeWidth="2" /><path d="M3 7 H5 M7 7 H14 M3 10 H5 M7 10 H14 M3 13 H5 M7 13 H14" stroke="#444" /></svg>
        </div>
        <div className="ml-[2px] w-[25px] h-[21px] bg-[#d6d6d6] flex items-center justify-center shrink-0">
          <svg width="16" height="16" viewBox="0 0 16 16"><rect width="16" height="16" fill="#a4a4a4" /><path d="M2 8 H9 M6 5 L9 8 L6 11 M11 3 V13" fill="none" stroke="#ffffff" strokeWidth="1.5" /></svg>
        </div>
        <div className="ml-[3px] w-[155px] h-[20px] bg-white flex items-center justify-between pl-[4px] pr-[4px] text-[#808080] shrink-0">
          <span>Main Model</span>
          <Chevron dir="down" />
        </div>
      </div>

      {/* key tips */}
      <div className="absolute left-0 top-[7px] w-[41px] h-[41px] border border-[#111111] bg-linear-to-b from-[#8a8a8a] to-[#5a5a5a] flex items-center">
        <svg className="ml-[6px]" width="22" height="32" viewBox="0 0 22 32">
          <path d="M2 1 H14 Q21 2 21 10 Q21 18 14 18 L21 31 H13 L8 20 V31 H2 Z" fill="#1d6fc0" />
        </svg>
        <Arrow className="ml-[2px] border-x-[4px] border-t-[4px] border-t-[#111111]" />
      </div>
      <Tip className="left-[14px] top-[20px] w-[13px]">F</Tip>
      <Tip className="left-[55px] top-[17px] w-[13px]">1</Tip>
      <Tip className="left-[79px] top-[17px] w-[13px]">2</Tip>
      <Tip className="left-[104px] top-[17px] w-[13px]" off>3</Tip>
      <Tip className="left-[139px] top-[17px] w-[13px]">4</Tip>
      <Tip className="left-[175px] top-[17px] w-[13px]" off>5</Tip>
      <Tip className="left-[212px] top-[17px] w-[12px]">&gt;</Tip>
      <Tip className="left-[82px] top-[49px] w-[13px]">A</Tip>
      <Tip className="left-[157px] top-[49px] w-[13px]">R</Tip>
      <Tip className="left-[223px] top-[49px] w-[13px]">S</Tip>
      <Tip className="left-[281px] top-[49px] w-[10px]">I</Tip>
      <Tip className="left-[338px] top-[49px] w-[14px]">N</Tip>
      <Tip className="left-[403px] top-[49px] w-[13px]">L</Tip>
      <Tip className="left-[483px] top-[49px] w-[13px]">T</Tip>
      <Tip className="left-[573px] top-[49px] w-[13px]">C</Tip>
      <Tip className="left-[636px] top-[49px] w-[13px]">V</Tip>
      <Tip className="left-[690px] top-[49px] w-[13px]">G</Tip>
      <Tip className="left-[752px] top-[49px] w-[14px]">D</Tip>
      <Tip className="left-[812px] top-[49px] w-[14px]">M</Tip>
      <Tip className="left-[868px] top-[48px] w-[18px]">X2</Tip>
      <Tip className="left-[891px] top-[48px] w-[18px]">X3</Tip>
    </div>
  );
}
